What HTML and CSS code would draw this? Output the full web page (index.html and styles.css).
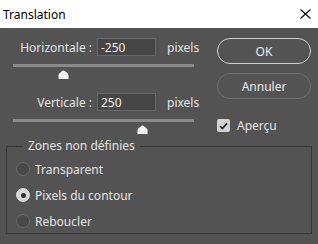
FILE: index.html
```html
<!DOCTYPE html>
<html lang="fr">
<head>
  <meta charset="UTF-8">
  <title>Translation</title>
  <link rel="stylesheet" href="styles.css">
</head>
<body>
<div class="dialog">
  <header class="titlebar">
    <span class="title">Translation</span>
    <svg class="close" width="11" height="10" viewBox="0 0 11 10">
      <path d="M0.5 0.5 L10.5 9.5 M10.5 0.5 L0.5 9.5" stroke="#000" stroke-width="1.1" fill="none"/>
    </svg>
  </header>
  <main class="content">
    <div class="top">
      <div class="fields">
        <div class="field">
          <label class="field-label">Horizontale :</label>
          <input class="field-input" type="text" value="-250">
          <span class="unit">pixels</span>
        </div>
        <div class="slider">
          <div class="track"></div>
          <svg class="thumb" style="margin-left: 45px" width="11" height="9" viewBox="0 0 11 9">
            <path d="M0.5 9 V5.2 Q0.5 4.2 1.5 3.3 L4.2 0.9 Q5.5 -0.1 6.8 0.9 L9.5 3.3 Q10.5 4.2 10.5 5.2 V9 Z" fill="#f2f2f2"/>
          </svg>
        </div>
        <div class="field">
          <label class="field-label">Verticale :</label>
          <input class="field-input" type="text" value="250">
          <span class="unit">pixels</span>
        </div>
        <div class="slider">
          <div class="track"></div>
          <svg class="thumb" style="margin-left: 124px" width="11" height="9" viewBox="0 0 11 9">
            <path d="M0.5 9 V5.2 Q0.5 4.2 1.5 3.3 L4.2 0.9 Q5.5 -0.1 6.8 0.9 L9.5 3.3 Q10.5 4.2 10.5 5.2 V9 Z" fill="#f2f2f2"/>
          </svg>
        </div>
      </div>
      <div class="actions">
        <button class="btn btn-default">OK</button>
        <button class="btn">Annuler</button>
        <label class="check">
          <span class="check-box">
            <svg width="9" height="8" viewBox="0 0 9 8">
              <path d="M1 4.2 L3.4 6.5 L8 1.3" stroke="#2e2e2e" stroke-width="1.8" fill="none"/>
            </svg>
          </span>
          Aperçu
        </label>
      </div>
    </div>
    <fieldset class="group">
      <legend class="group-title">Zones non définies</legend>
      <label class="radio"><span class="radio-dot"></span>Transparent</label>
      <label class="radio"><span class="radio-dot checked"></span>Pixels du contour</label>
      <label class="radio"><span class="radio-dot"></span>Reboucler</label>
    </fieldset>
  </main>
</div>
</body>
</html>
```

FILE: styles.css
```css
body {
  margin: 0;
  font-family: "Noto Sans", "Open Sans", sans-serif;
  font-size: 12px;
}
.dialog {
  width: 318px;
  height: 244px;
  display: flex;
  flex-direction: column;
}
.titlebar {
  height: 28px;
  background-color: #fff;
  display: flex;
  align-items: center;
  justify-content: space-between;
  padding: 0 7px 0 3px;
}
.title {
  color: #000;
  font-size: 12px;
}
.close {
  display: block;
}
.content {
  flex: 1;
  background-color: #535353;
  color: #e4e4e4;
  display: flex;
  flex-direction: column;
}
.top {
  height: 110px;
  display: flex;
  justify-content: space-between;
}
.fields {
  padding: 10px 0 0 13px;
  width: 181px;
}
.field {
  display: flex;
  align-items: center;
  height: 18px;
  white-space: nowrap;
}
.field-label {
  flex: 0 0 79px;
  text-align: right;
}
.field-input {
  flex: 0 0 59px;
  box-sizing: border-box;
  width: 59px;
  height: 18px;
  margin-left: 5px;
  padding: 0 3px;
  border: 1px solid #676767;
  background-color: #464646;
  color: #f0f0f0;
  font-family: inherit;
  font-size: 12px;
  outline: none;
}
.unit {
  flex-shrink: 0;
  margin-left: 11px;
}
.slider {
  padding-top: 8px;
  height: 21px;
  margin-bottom: 8px;
}
.track {
  height: 3px;
  background-color: #8a8a8a;
}
.thumb {
  display: block;
  margin-top: 3px;
}
.actions {
  width: 94px;
  margin-right: 7px;
  padding-top: 10px;
  display: flex;
  flex-direction: column;
}
.btn {
  height: 26px;
  border-radius: 13px;
  border: 1px solid #6e6e6e;
  background: transparent;
  color: #ececec;
  font-family: inherit;
  font-size: 12px;
  margin-bottom: 9px;
}
.btn-default {
  border: 1.5px solid #cfcfcf;
}
.check {
  display: flex;
  align-items: center;
  margin-top: 9px;
}
.check-box {
  width: 13px;
  height: 13px;
  border-radius: 2px;
  background-color: #d2d2d2;
  display: flex;
  align-items: center;
  justify-content: center;
  margin-right: 7px;
}
.group {
  margin: 0 6px;
  padding: 2px 0 0 9px;
  border: 1px solid #383838;
  height: 96px;
  box-sizing: border-box;
  min-width: 0;
}
.group-title {
  margin-left: 7px;
  padding: 0 5px;
  height: 16px;
  line-height: 16px;
}
.radio {
  display: flex;
  align-items: center;
  height: 26px;
}
.radio-dot {
  box-sizing: border-box;
  width: 14px;
  height: 14px;
  border-radius: 50%;
  border: 1px solid #6a6a6a;
  background-color: #494949;
  margin-right: 5px;
  display: flex;
  align-items: center;
  justify-content: center;
}
.radio-dot.checked {
  border-color: #d8d8d8;
  background-color: #d8d8d8;
}
.radio-dot.checked::after {
  content: "";
  width: 5px;
  height: 5px;
  border-radius: 50%;
  background-color: #2e2e2e;
}
```
